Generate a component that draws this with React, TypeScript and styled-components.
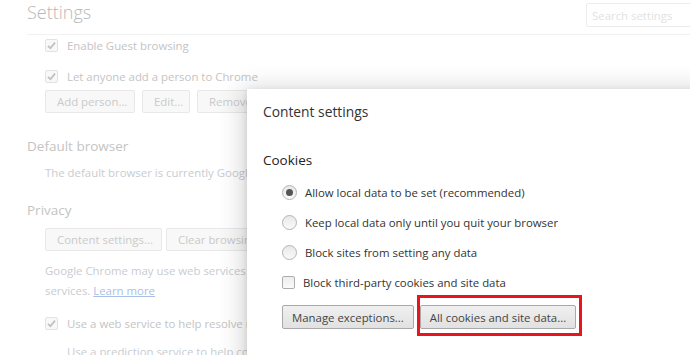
import React from "react";
import styled, { createGlobalStyle } from "styled-components";

const GlobalStyle = createGlobalStyle`
  html, body { margin: 0; padding: 0; background: #fff; }
  body { font-family: "Open Sans", "Noto Sans", sans-serif; font-size: 11.4px; }
  * { box-sizing: border-box; }
`;

const Screen = styled.div`
  position: relative;
  width: 690px;
  height: 355px;
  overflow: hidden;
  background: #fff;
`;

const SettingsPage = styled.div`
  display: flex;
  flex-direction: column;
  padding-left: 27px;
`;

const Header = styled.header`
  display: flex;
  align-items: center;
  justify-content: space-between;
  height: 35px;
  border-bottom: 1px solid #f1f1f1;
  padding-bottom: 5px;
`;

const PageTitle = styled.h1`
  margin: -5px 0 0;
  font-weight: 300;
  font-size: 18px;
  color: #b8b8b8;
`;

const SearchBox = styled.div`
  width: 120px;
  height: 24px;
  border: 1px solid #ececec;
  border-radius: 2px;
  padding: 0 5px;
  display: flex;
  align-items: center;
  color: #e2e2e2;
  font-size: 11.4px;
  margin-right: -16px;
  margin-top: 1px;
`;

const Section = styled.section<{ $top: number }>`
  display: flex;
  flex-direction: column;
  margin-top: ${(p) => p.$top}px;
`;

const SectionHead = styled.h2`
  margin: 0;
  font-weight: 400;
  font-size: 13.5px;
  line-height: 20px;
  color: #c4c4c4;
`;

const Indent = styled.div<{ $top?: number }>`
  padding-left: 18px;
  margin-top: ${(p) => p.$top ?? 0}px;
  display: flex;
  flex-direction: column;
`;

const FadedRow = styled.div<{ $h: number; $top?: number }>`
  display: flex;
  align-items: center;
  height: ${(p) => p.$h}px;
  margin-top: ${(p) => p.$top ?? 0}px;
  color: #c4c4c4;
  white-space: nowrap;
  gap: 9px;
`;

const FadedText = styled.div<{ $h: number; $indent?: number; $top?: number }>`
  height: ${(p) => p.$h}px;
  line-height: ${(p) => p.$h}px;
  margin-top: ${(p) => p.$top ?? 0}px;
  color: #c9ccd1;
  white-space: nowrap;
  padding-left: ${(p) => p.$indent ?? 0}px;
`;

const LearnMore = styled.span`
  color: #a9bfe6;
  text-decoration: underline;
`;

const FadedCheck = styled.span`
  width: 13px;
  height: 13px;
  border: 1px solid #e2e2e2;
  border-radius: 2px;
  background: #f8f8f8;
  display: inline-flex;
  align-items: center;
  justify-content: center;
  flex: none;
`;

const ButtonRow = styled.div<{ $top: number; $gap: number }>`
  display: flex;
  gap: ${(p) => p.$gap}px;
  margin-top: ${(p) => p.$top}px;
`;

const FadedButton = styled.span<{ $w: number }>`
  width: ${(p) => p.$w}px;
  height: 23px;
  border: 1px solid #e8e8e8;
  border-radius: 2px;
  background: #f8f8f8;
  color: #cacaca;
  display: inline-flex;
  align-items: center;
  padding: 0 11px;
  white-space: nowrap;
  overflow: hidden;
  flex: none;
`;

const Dialog = styled.div`
  position: absolute;
  left: 247px;
  top: 89px;
  width: 470px;
  height: 300px;
  background: #fff;
  box-shadow: 0 4px 23px 5px rgba(0, 0, 0, 0.16), 0 2px 6px rgba(0, 0, 0, 0.12);
  padding: 0 0 0 16px;
  display: flex;
  flex-direction: column;
  color: #333;
`;

const DialogTitle = styled.h1`
  margin: 12px 0 0;
  height: 22px;
  line-height: 22px;
  font-size: 13.8px;
  font-weight: 400;
  color: #333;
`;

const GroupTitle = styled.h2`
  margin: 26px 0 0;
  height: 22px;
  line-height: 22px;
  font-size: 13.5px;
  font-weight: 400;
  color: #222;
`;

const Options = styled.div`
  display: flex;
  flex-direction: column;
  padding-left: 19px;
  margin-top: 6px;
`;

const OptionRow = styled.label<{ $h: number }>`
  display: flex;
  align-items: center;
  height: ${(p) => p.$h}px;
  gap: 8px;
  white-space: nowrap;
  color: #333;
`;

const Radio = styled.span<{ $checked?: boolean }>`
  width: 15px;
  height: 15px;
  border-radius: 50%;
  border: 1px solid #b4b4b4;
  background: linear-gradient(#e8e8e8, #fafafa);
  display: inline-flex;
  align-items: center;
  justify-content: center;
  flex: none;
  &::after {
    content: "";
    width: 7px;
    height: 7px;
    border-radius: 50%;
    background: ${(p) => (p.$checked ? "#555" : "transparent")};
  }
`;

const Checkbox = styled.span`
  width: 13px;
  height: 13px;
  border: 1px solid #adadad;
  border-radius: 2px;
  background: linear-gradient(#ededed, #fbfbfb);
  flex: none;
`;

const DialogButtons = styled.div`
  display: flex;
  gap: 6px;
  padding-left: 19px;
  margin-top: 8px;
`;

const DialogButton = styled.span`
  height: 24px;
  padding: 0 9px;
  border: 1px solid #a9a9a9;
  border-radius: 2px;
  background: linear-gradient(#f0f0f0, #e1e1e1);
  color: #444;
  display: inline-flex;
  align-items: center;
  white-space: nowrap;
`;

const Highlight = styled.span`
  position: relative;
  display: inline-flex;
  &::after {
    content: "";
    position: absolute;
    left: -3px;
    right: -6px;
    top: -10px;
    bottom: -7px;
    border: 3px solid #e8141e;
    pointer-events: none;
  }
`;

const Tick = () => (
  <svg width="9" height="9" viewBox="0 0 9 9">
    <path d="M1 4.8 L3.4 7.2 L8 1.6" stroke="#c0c0c0" strokeWidth="1.8" fill="none" />
  </svg>
);

export default function App() {
  return (
    <Screen>
      <GlobalStyle />
      <SettingsPage>
        <Header>
          <PageTitle>Settings</PageTitle>
          <SearchBox>Search settings</SearchBox>
        </Header>
        <Indent>
          <FadedRow $h={20}>
            <FadedCheck><Tick /></FadedCheck>Enable Guest browsing
          </FadedRow>
          <FadedRow $h={20} $top={11}>
            <FadedCheck><Tick /></FadedCheck>Let anyone add a person to Chrome
          </FadedRow>
          <ButtonRow $top={4} $gap={7}>
            <FadedButton $w={90}>Add person...</FadedButton>
            <FadedButton $w={48}>Edit...</FadedButton>
            <FadedButton $w={80}>Remove...</FadedButton>
          </ButtonRow>
        </Indent>
        <Section $top={23}>
          <SectionHead>Default browser</SectionHead>
          <Indent $top={7}>
            <FadedText $h={20}>The default browser is currently Google Chrome.</FadedText>
          </Indent>
        </Section>
        <Section $top={17}>
          <SectionHead>Privacy</SectionHead>
          <Indent $top={8}>
            <ButtonRow $top={0} $gap={4}>
              <FadedButton $w={117}>Content settings...</FadedButton>
              <FadedButton $w={140}>Clear browsing data...</FadedButton>
            </ButtonRow>
            <FadedText $h={20} $top={10}>Google Chrome may use web services to improve your browsing experience.</FadedText>
            <FadedText $h={20}>services. <LearnMore>Learn more</LearnMore></FadedText>
            <FadedRow $h={20} $top={12}>
              <FadedCheck><Tick /></FadedCheck>Use a web service to help resolve navigation errors
            </FadedRow>
            <FadedText $h={20} $indent={22} $top={9}>Use a prediction service to help complete searches</FadedText>
          </Indent>
        </Section>
      </SettingsPage>

      <Dialog>
        <DialogTitle>Content settings</DialogTitle>
        <GroupTitle>Cookies</GroupTitle>
        <Options>
          <OptionRow $h={30}><Radio $checked />Allow local data to be set (recommended)</OptionRow>
          <OptionRow $h={30}><Radio />Keep local data only until you quit your browser</OptionRow>
          <OptionRow $h={30}><Radio />Block sites from setting any data</OptionRow>
          <OptionRow $h={30}><Checkbox />Block third-party cookies and site data</OptionRow>
        </Options>
        <DialogButtons>
          <DialogButton>Manage exceptions...</DialogButton>
          <Highlight>
            <DialogButton>All cookies and site data...</DialogButton>
          </Highlight>
        </DialogButtons>
      </Dialog>
    </Screen>
  );
}
